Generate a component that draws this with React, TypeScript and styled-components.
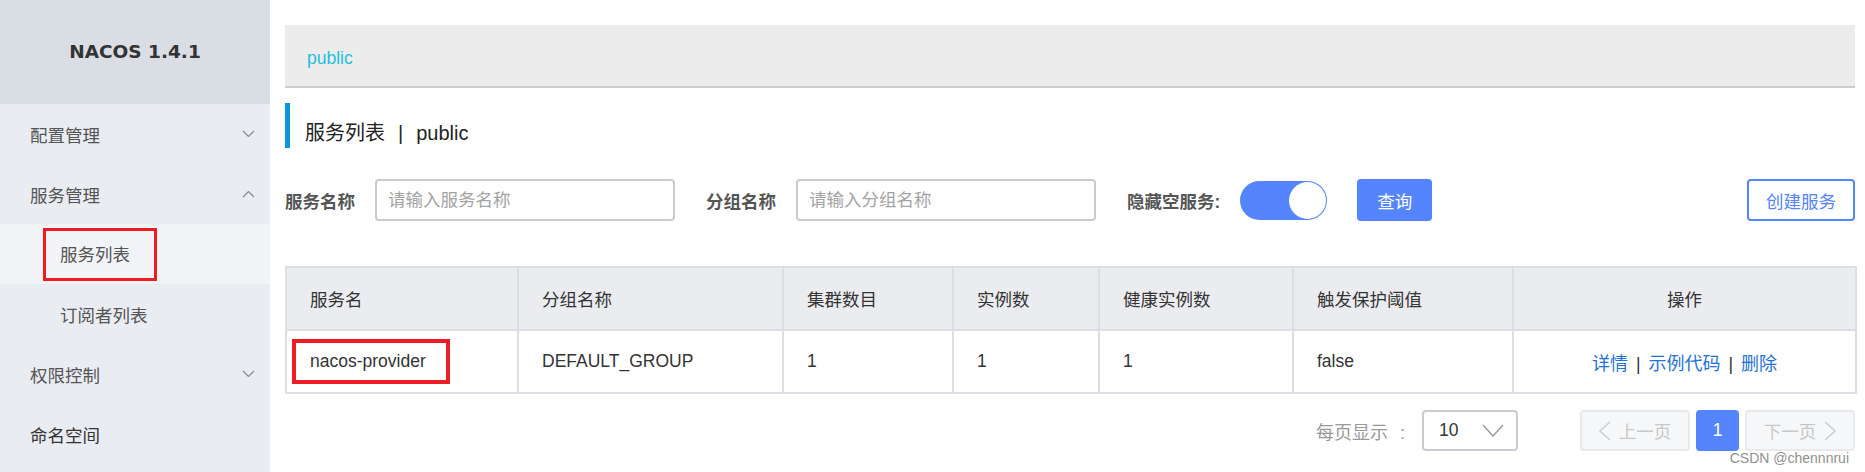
import React from 'react';
import styled, { createGlobalStyle } from 'styled-components';

const BLUE = '#5584ff';
const LINE = '#dcdee3';

const GlobalStyle = createGlobalStyle`
  html, body {
    margin: 0;
    padding: 0;
    background: #fff;
  }
  body {
    font-family: "Liberation Sans", "Noto Sans CJK SC", sans-serif;
    font-size: 17.5px;
    color: #333;
  }
  * { box-sizing: border-box; }
`;

const Page = styled.div`
  position: relative;
  display: flex;
  width: 1865px;
  height: 472px;
  overflow: hidden;
`;

const Sidebar = styled.aside`
  width: 270px;
  flex-shrink: 0;
  background: #e9ecf1;
  display: flex;
  flex-direction: column;
`;

const Brand = styled.div`
  height: 104px;
  background: #d9dde4;
  display: flex;
  align-items: center;
  justify-content: center;
  font-family: "DejaVu Sans", Verdana, sans-serif;
  font-weight: 700;
  font-size: 18.5px;
  color: #333;
  padding-bottom: 2px;
`;

const MenuItem = styled.div<{ $sub?: boolean; $active?: boolean; $dark?: boolean }>`
  height: 60px;
  display: flex;
  align-items: center;
  justify-content: space-between;
  padding: 0 15px 0 ${p => (p.$sub ? 60 : 30)}px;
  background: ${p => (p.$active ? '#f2f3f7' : 'transparent')};
  color: ${p => (p.$dark ? '#333' : '#555')};
  font-size: 17.5px;
`;

const Marked = styled.span<{ $thick?: number }>`
  display: inline-block;
  border: ${p => p.$thick ?? 3}px solid #ee1d24;
  line-height: 25px;
`;

const MenuMark = styled(Marked)`
  margin-left: -17px;
  padding: 12px 24px 10px 14px;
`;

const Chevron = ({ up }: { up?: boolean }) => (
  <svg width="13" height="8" viewBox="0 0 13 8">
    <polyline
      points={up ? '1,7 6.5,1.5 12,7' : '1,1 6.5,6.5 12,1'}
      fill="none"
      stroke="#888"
      strokeWidth="1.2"
    />
  </svg>
);

const Main = styled.main`
  flex: 1;
  min-width: 0;
  padding: 25px 10px 0 15px;
  display: flex;
  flex-direction: column;
`;

const NamespaceBar = styled.div`
  height: 63px;
  background: #ececec;
  border-bottom: 2px solid #cccccc;
  display: flex;
  align-items: center;
  padding-left: 22px;
`;

const NamespaceTab = styled.span`
  color: #1fbfdc;
  font-size: 17.5px;
  padding-top: 6px;
`;

const PageTitle = styled.h1`
  margin: 15px 0 0;
  height: 45px;
  border-left: 5px solid #0a98d5;
  padding: 16px 0 0 15px;
  font-size: 20px;
  font-weight: 400;
  line-height: 28px;
  color: #222;
`;

const Sep = styled.span`
  margin: 0 13px;
`;

const SearchRow = styled.div`
  margin-top: 31px;
  height: 42px;
  display: flex;
  align-items: center;
`;

const FieldLabel = styled.label<{ $gap?: number }>`
  font-weight: 700;
  color: #555;
  font-size: 17.5px;
  margin-right: ${p => p.$gap ?? 20}px;
`;

const TextInput = styled.input`
  width: 300px;
  height: 42px;
  border: 2px solid #c8cbd2;
  border-radius: 4px;
  padding: 0 11px;
  font-family: inherit;
  font-size: 17.5px;
  color: #333;
  margin-right: 31px;
  outline: none;
  &::placeholder {
    color: #a3a3a3;
  }
`;

const Toggle = styled.div<{ $on?: boolean }>`
  width: 87px;
  height: 39px;
  border-radius: 20px;
  background: ${BLUE};
  display: flex;
  align-items: center;
  justify-content: ${p => (p.$on ? 'flex-end' : 'flex-start')};
  padding: 1px;
  margin-right: 30px;
`;

const Knob = styled.span`
  width: 37px;
  height: 37px;
  border-radius: 50%;
  background: #fff;
`;

const Button = styled.button<{ $ghost?: boolean; $w: number }>`
  width: ${p => p.$w}px;
  height: 42px;
  border-radius: 4px;
  border: 2px solid ${BLUE};
  background: ${p => (p.$ghost ? '#fff' : BLUE)};
  color: ${p => (p.$ghost ? BLUE : '#fff')};
  font-family: inherit;
  font-size: 17.5px;
  padding: 0;
`;

const Spacer = styled.div`
  flex: 1;
`;

const Table = styled.table`
  margin-top: 45px;
  width: 100%;
  border-collapse: collapse;
  table-layout: fixed;
  border: 2px solid ${LINE};
`;

const Col = styled.col<{ $w: number }>`
  width: ${p => p.$w}px;
`;

const HeadCell = styled.th<{ $center?: boolean }>`
  height: 63px;
  background: #ebecf0;
  border: 2px solid ${LINE};
  font-weight: 400;
  font-size: 17.5px;
  color: #333;
  text-align: ${p => (p.$center ? 'center' : 'left')};
  padding: 0 0 0 ${p => (p.$center ? 0 : 23)}px;
`;

const Cell = styled.td<{ $center?: boolean }>`
  height: 63px;
  border: 2px solid ${LINE};
  font-size: 17.5px;
  color: #333;
  text-align: ${p => (p.$center ? 'center' : 'left')};
  padding: 0 0 0 ${p => (p.$center ? 0 : 23)}px;
`;

const RowMark = styled(Marked)`
  margin-left: -18px;
  padding: 6px 20px 6px 14px;
`;

const Link = styled.a`
  color: #1f72d6;
  font-size: 18px;
  text-decoration: none;
`;

const LinkSep = styled.span`
  color: #333;
  margin: 0 8px;
`;

const Pager = styled.div`
  margin-top: 16px;
  height: 41px;
  display: flex;
  align-items: center;
  justify-content: flex-end;
`;

const PagerLabel = styled.span`
  color: #999;
  font-size: 18px;
  margin-right: 17px;
`;

const PagerColon = styled.span`
  margin-left: 12px;
`;

const Select = styled.div`
  width: 96px;
  height: 41px;
  border: 2px solid #c8cbd2;
  border-radius: 4px;
  display: flex;
  align-items: center;
  justify-content: space-between;
  padding: 0 12px 0 15px;
  color: #333;
  margin-right: 56px;
`;

const PageButton = styled.div<{ $current?: boolean; $w: number }>`
  width: ${p => p.$w}px;
  height: 41px;
  border-radius: 4px;
  border: 2px solid ${p => (p.$current ? BLUE : '#e8e9ed')};
  background: ${p => (p.$current ? BLUE : '#f6f7f9')};
  color: ${p => (p.$current ? '#fff' : '#c8c8c8')};
  display: flex;
  align-items: center;
  justify-content: center;
  gap: 8px;
  margin-left: 6px;
`;

const Watermark = styled.div`
  position: absolute;
  right: 16px;
  bottom: 6px;
  font-family: "Liberation Sans", Arial, sans-serif;
  font-size: 14px;
  color: #8f8f8f;
`;

const ArrowDown = () => (
  <svg width="22" height="13" viewBox="0 0 22 13">
    <polyline points="1,1 11,12 21,1" fill="none" stroke="#999" strokeWidth="1.4" />
  </svg>
);

const Arrow = ({ right }: { right?: boolean }) => (
  <svg width="12" height="20" viewBox="0 0 12 20">
    <polyline
      points={right ? '1,1 11,10 1,19' : '11,1 1,10 11,19'}
      fill="none"
      stroke="#cfcfcf"
      strokeWidth="1.6"
    />
  </svg>
);

const columns = [
  { title: '服务名', w: 232 },
  { title: '分组名称', w: 265 },
  { title: '集群数目', w: 170 },
  { title: '实例数', w: 146 },
  { title: '健康实例数', w: 194 },
  { title: '触发保护阈值', w: 220 },
  { title: '操作', w: 343, center: true },
];

export default function App() {
  return (
    <Page>
      <GlobalStyle />
      <Sidebar>
        <Brand>NACOS 1.4.1</Brand>
        <MenuItem>
          配置管理
          <Chevron />
        </MenuItem>
        <MenuItem>
          服务管理
          <Chevron up />
        </MenuItem>
        <MenuItem $sub $active>
          <MenuMark>服务列表</MenuMark>
        </MenuItem>
        <MenuItem $sub>订阅者列表</MenuItem>
        <MenuItem>
          权限控制
          <Chevron />
        </MenuItem>
        <MenuItem $dark>命名空间</MenuItem>
      </Sidebar>

      <Main>
        <NamespaceBar>
          <NamespaceTab>public</NamespaceTab>
        </NamespaceBar>
        <PageTitle>
          服务列表<Sep>|</Sep>public
        </PageTitle>

        <SearchRow>
          <FieldLabel>服务名称</FieldLabel>
          <TextInput placeholder="请输入服务名称" />
          <FieldLabel>分组名称</FieldLabel>
          <TextInput placeholder="请输入分组名称" />
          <FieldLabel $gap={20}>隐藏空服务:</FieldLabel>
          <Toggle $on>
            <Knob />
          </Toggle>
          <Button $w={75}>查询</Button>
          <Spacer />
          <Button $ghost $w={108}>创建服务</Button>
        </SearchRow>

        <Table>
          <colgroup>
            {columns.map(c => (
              <Col key={c.title} $w={c.w} />
            ))}
          </colgroup>
          <thead>
            <tr>
              {columns.map(c => (
                <HeadCell key={c.title} $center={c.center}>
                  {c.title}
                </HeadCell>
              ))}
            </tr>
          </thead>
          <tbody>
            <tr>
              <Cell>
                <RowMark $thick={4}>nacos-provider</RowMark>
              </Cell>
              <Cell>DEFAULT_GROUP</Cell>
              <Cell>1</Cell>
              <Cell>1</Cell>
              <Cell>1</Cell>
              <Cell>false</Cell>
              <Cell $center>
                <Link>详情</Link>
                <LinkSep>|</LinkSep>
                <Link>示例代码</Link>
                <LinkSep>|</LinkSep>
                <Link>删除</Link>
              </Cell>
            </tr>
          </tbody>
        </Table>

        <Pager>
          <PagerLabel>
            每页显示<PagerColon>:</PagerColon>
          </PagerLabel>
          <Select>
            10
            <ArrowDown />
          </Select>
          <PageButton $w={110}>
            <Arrow />
            上一页
          </PageButton>
          <PageButton $current $w={43}>1</PageButton>
          <PageButton $w={110}>
            下一页
            <Arrow right />
          </PageButton>
        </Pager>
      </Main>

      <Watermark>CSDN @chennnrui</Watermark>
    </Page>
  );
}
